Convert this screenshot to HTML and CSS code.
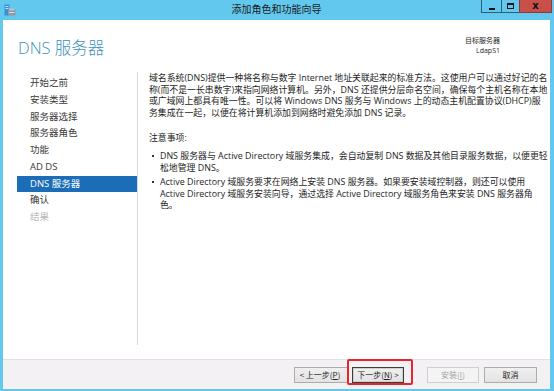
FILE: index.html
```html
<!DOCTYPE html>
<html lang="zh-CN">
<head>
<meta charset="utf-8">
<title>添加角色和功能向导</title>
<link rel="stylesheet" href="styles.css">
</head>
<body>
<div class="window">
  <div class="titlebar">
    <svg class="appicon" width="12" height="12" viewBox="0 0 12 12">
      <rect x="0.5" y="0.5" width="5" height="11" fill="#3a8fd6"/>
      <rect x="1.5" y="2" width="3" height="1" fill="#bfe3ff"/>
      <rect x="1.5" y="4" width="3" height="1" fill="#bfe3ff"/>
      <rect x="4" y="6" width="7.5" height="5.5" fill="#8e9aa6"/>
      <rect x="5" y="4.5" width="5" height="2" fill="#b9c2cb"/>
      <rect x="5" y="8" width="5.5" height="1" fill="#d5dbe0"/>
    </svg>
    <div class="title">添加角色和功能向导</div>
    <div class="ctrls">
      <span class="cb cb-min"><span class="g-min"></span></span>
      <span class="cb cb-max"><span class="g-max"></span></span>
      <span class="cb cb-close">x</span>
    </div>
  </div>
  <div class="frame">
    <div class="client">
      <div class="header">
        <h1 class="heading">DNS 服务器</h1>
        <div class="target">
          <div>目标服务器</div>
          <div>LdapS1</div>
        </div>
      </div>
      <div class="main">
        <ul class="nav">
          <li>开始之前</li>
          <li>安装类型</li>
          <li>服务器选择</li>
          <li>服务器角色</li>
          <li>功能</li>
          <li>AD DS</li>
          <li class="active">DNS 服务器</li>
          <li>确认</li>
          <li class="disabled">结果</li>
        </ul>
        <div class="content">
          <p class="intro">域名系统(DNS)提供一种将名称与数字 Internet 地址关联起来的标准方法。这使用户可以通过好记的名<br>称(而不是一长串数字)来指向网络计算机。另外，DNS 还提供分层命名空间，确保每个主机名称在本地<br>或广域网上都具有唯一性。可以将 Windows DNS 服务与 Windows 上的动态主机配置协议(DHCP)服<br>务集成在一起，以便在将计算机添加到网络时避免添加 DNS 记录。</p>
          <p class="notes">注意事项:</p>
          <ul class="bullets">
            <li>DNS 服务器与 Active Directory 域服务集成，会自动复制 DNS 数据及其他目录服务数据，以便更轻<br>松地管理 DNS。</li>
            <li>Active Directory 域服务要求在网络上安装 DNS 服务器。如果要安装域控制器，则还可以使用<br>Active Directory 域服务安装向导，通过选择 Active Directory 域服务角色来安装 DNS 服务器角<br>色。</li>
          </ul>
        </div>
      </div>
      <div class="footer">
        <button class="btn btn-prev">&lt; 上一步(<u>P</u>)</button>
        <button class="btn btn-next btn-default">下一步(<u>N</u>) &gt;</button>
        <button class="btn btn-install" disabled>安装(<u>I</u>)</button>
        <button class="btn btn-cancel">取消</button>
      </div>
    </div>
  </div>
  <div class="highlight"></div>
</div>
</body>
</html>
```
FILE: styles.css
```css
html, body {
  margin: 0;
  padding: 0;
}
body {
  width: 554px;
  height: 391px;
  overflow: hidden;
  background: #62c8ee;
  font-family: "Open Sans", "Noto Sans CJK SC", sans-serif;
  color: #1e1e1e;
}
.window {
  position: relative;
  width: 554px;
  height: 391px;
  display: flex;
  flex-direction: column;
  background: #62c8ee;
}
.titlebar {
  height: 20px;
  display: flex;
  align-items: flex-start;
  flex: none;
}
.appicon {
  margin: 4px 0 0 4px;
  flex: none;
}
.title {
  flex: 1;
  text-align: center;
  font-size: 10px;
  line-height: 18px;
  color: #1a1a1a;
  padding-left: 56px;
  font-family: "Noto Sans CJK SC", sans-serif;
}
.ctrls {
  display: flex;
  margin-right: 2px;
  flex: none;
}
.cb {
  height: 13px;
  box-sizing: border-box;
  border: 1px solid #2e5f77;
  border-top: none;
  display: flex;
  align-items: center;
  justify-content: center;
}
.cb + .cb {
  margin-left: -1px;
}
.cb-min {
  width: 21px;
}
.cb-max {
  width: 19px;
}
.cb-close {
  width: 33px;
  background: #c7504b;
  border-color: #8c3a3a;
  font: bold 10px/1 "DejaVu Sans", sans-serif;
  color: #111;
  padding-bottom: 1px;
}
.g-min {
  width: 6px;
  height: 2px;
  background: #111;
  margin-top: 5px;
}
.g-max {
  width: 5px;
  height: 3px;
  border: 1px solid #111;
  border-top-width: 2px;
  margin-bottom: 1px;
}
.frame {
  flex: 1;
  display: flex;
  padding: 0 4px 2px 3px;
  min-height: 0;
}
.client {
  flex: 1;
  background: #fff;
  display: flex;
  flex-direction: column;
}
.header {
  height: 52px;
  flex: none;
  display: flex;
  justify-content: space-between;
  padding: 0 50px 0 15px;
}
.heading {
  margin: 17px 0 0;
  font-size: 16.5px;
  font-weight: 300;
  color: #3a93bd;
  line-height: 22px;
  font-family: "Open Sans", "Noto Sans CJK SC", sans-serif;
}
.target {
  margin-top: 16px;
  text-align: right;
  font-size: 7px;
  line-height: 9.5px;
  color: #1e1e1e;
}
.main {
  flex: 1;
  display: flex;
  padding-bottom: 14px;
  min-height: 0;
}
.nav {
  list-style: none;
  margin: 0 0 0 14px;
  padding: 3px 0 0;
  width: 120px;
  flex: none;
  border-right: 1px solid #d8d8d8;
  font-size: 9.5px;
}
.nav li {
  height: 16.75px;
  line-height: 16.75px;
  padding-left: 13px;
  color: #3a3a3a;
}
.nav li.active {
  background: #1a6db6;
  color: #fff;
}
.nav li.disabled {
  color: #b9b9b9;
}
.content {
  flex: 1;
  padding: 0 0 0 11px;
  font-size: 8.9px;
  line-height: 11.7px;
  white-space: nowrap;
}
.content p {
  margin: 0;
}
.intro {
  margin-bottom: 13px !important;
}
.notes {
  margin-bottom: 6.5px !important;
}
.bullets {
  list-style: none;
  margin: 0;
  padding: 0;
}
.bullets li {
  position: relative;
  padding-left: 11px;
  margin-bottom: 2.5px;
}
.bullets li::before {
  content: "";
  position: absolute;
  left: 3px;
  top: 5px;
  width: 2px;
  height: 2px;
  background: #333;
}
.footer {
  height: 29px;
  flex: none;
  border-top: 1px solid #e2dee1;
  background: #f4f1f4;
  display: flex;
  align-items: center;
  justify-content: flex-end;
  padding-right: 13px;
}
.btn {
  height: 16px;
  box-sizing: border-box;
  padding: 0;
  margin: 0;
  border: 1px solid #acacac;
  background: linear-gradient(#f0f0f0, #e3e3e3);
  font-family: "Noto Sans CJK SC", sans-serif;
  font-size: 8px;
  line-height: 14px;
  color: #1e1e1e;
  border-radius: 0;
}
.btn u {
  text-decoration: underline;
}
.btn-prev {
  width: 55px;
  padding-right: 3px;
}
.btn-next {
  width: 52px;
  margin-left: 3px;
}
.btn-default {
  border-color: #3c3c3c;
  box-shadow: inset 0 0 0 1px #cfcfcf;
}
.btn-install {
  width: 52px;
  margin-left: 23px;
  background: #f4f4f4;
  border-color: #cfcfcf;
  color: #a3a3a3;
}
.btn-cancel {
  width: 53px;
  margin-left: 5px;
}
.highlight {
  position: absolute;
  left: 347px;
  top: 359px;
  width: 66px;
  height: 26px;
  box-sizing: border-box;
  border: 2px solid #e8252a;
  border-radius: 2px;
}
```
